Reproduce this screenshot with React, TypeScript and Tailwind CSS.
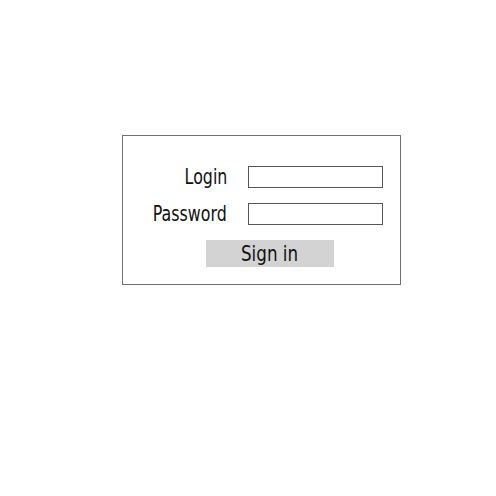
import React from "react";

const App: React.FC = () => {
  return (
    <div className="w-[496px] h-[496px] bg-white pt-[135px] pl-[122px]" style={{ fontFamily: '"DejaVu Sans", sans-serif' }}>
      <div className="w-[279px] h-[150px] border border-[#707070] pt-[30px] pl-[20px] text-[#111]">
        <div className="grid grid-cols-[84px_135px] gap-x-[21px] gap-y-[15px] items-center">
          <label className="flex justify-end whitespace-nowrap text-[22px] leading-[22px]">
            <span className="inline-block origin-right scale-x-[0.72]">Login</span>
          </label>
          <input className="h-[22px] border border-[#555] bg-white" />
          <label className="flex justify-end whitespace-nowrap text-[22px] leading-[22px]">
            <span className="inline-block origin-right scale-x-[0.72]">Password</span>
          </label>
          <input type="password" className="h-[22px] border border-[#555] bg-white" />
        </div>
        <button className="mt-[15px] ml-[63px] w-[128px] h-[27px] bg-[#d3d3d3] text-[22px] leading-[27px] text-center whitespace-nowrap">
          <span className="inline-block scale-x-[0.76]">Sign in</span>
        </button>
      </div>
    </div>
  );
};

export default App;
